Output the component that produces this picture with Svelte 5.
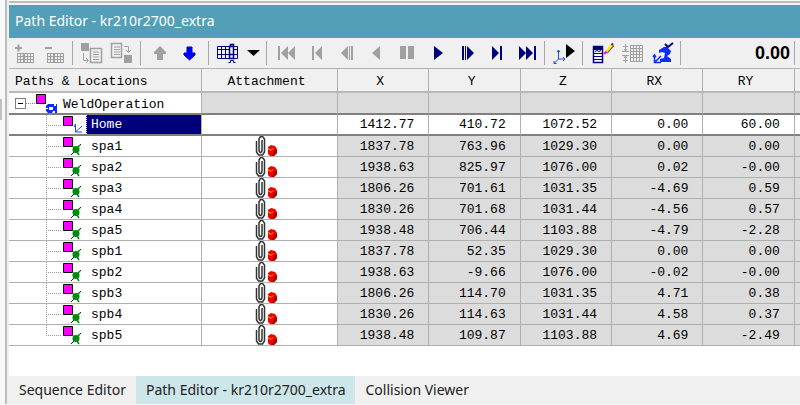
<script lang="ts">
  interface Location {
    name: string;
    kind: "home" | "weld";
    values: string[];
  }

  const axes = ["X", "Y", "Z", "RX", "RY"];

  const locations: Location[] = [
    { name: "Home", kind: "home", values: ["1412.77", "410.72", "1072.52", "0.00", "60.00"] },
    { name: "spa1", kind: "weld", values: ["1837.78", "763.96", "1029.30", "0.00", "0.00"] },
    { name: "spa2", kind: "weld", values: ["1938.63", "825.97", "1076.00", "0.02", "-0.00"] },
    { name: "spa3", kind: "weld", values: ["1806.26", "701.61", "1031.35", "-4.69", "0.59"] },
    { name: "spa4", kind: "weld", values: ["1830.26", "701.68", "1031.44", "-4.56", "0.57"] },
    { name: "spa5", kind: "weld", values: ["1938.48", "706.44", "1103.88", "-4.79", "-2.28"] },
    { name: "spb1", kind: "weld", values: ["1837.78", "52.35", "1029.30", "0.00", "0.00"] },
    { name: "spb2", kind: "weld", values: ["1938.63", "-9.66", "1076.00", "-0.02", "-0.00"] },
    { name: "spb3", kind: "weld", values: ["1806.26", "114.70", "1031.35", "4.71", "0.38"] },
    { name: "spb4", kind: "weld", values: ["1830.26", "114.63", "1031.44", "4.58", "0.37"] },
    { name: "spb5", kind: "weld", values: ["1938.48", "109.87", "1103.88", "4.69", "-2.49"] },
  ];

  // Toolbar groups, a separator is drawn after each one
  const groups = [
    [
      { icon: "add", label: "Add column", disabled: true },
      { icon: "remove", label: "Remove column", disabled: true },
    ],
    [
      { icon: "moveIn", label: "Move into path", disabled: true },
      { icon: "moveOut", label: "Move out of path", disabled: true },
    ],
    [
      { icon: "up", label: "Move up", disabled: true },
      { icon: "down", label: "Move down" },
    ],
    [
      { icon: "columns", label: "Customize columns" },
      { icon: "caret", label: "Column sets" },
    ],
    [
      { icon: "first", label: "Jump to start", disabled: true },
      { icon: "prev", label: "Previous location", disabled: true },
      { icon: "stepBack", label: "Step backward", disabled: true },
      { icon: "reverse", label: "Play backward", disabled: true },
      { icon: "pause", label: "Pause", disabled: true },
      { icon: "play", label: "Play forward" },
      { icon: "step", label: "Step forward" },
      { icon: "next", label: "Next location" },
      { icon: "last", label: "Jump to end" },
    ],
    [{ icon: "jump", label: "Play to location" }],
    [
      { icon: "edit", label: "Edit parameters" },
      { icon: "adjust", label: "Adjust rows", disabled: true },
      { icon: "robot", label: "Check robot reach" },
    ],
  ];

  const tabs = ["Sequence Editor", "Path Editor - kr210r2700_extra", "Collision Viewer"];

  let expanded = $state(true);
  let selected = $state("Home");
  let activeTab = $state(tabs[1]);
</script>

{#snippet icon(name: string)}
  <svg class="icon" width="24" height="24" viewBox="0 0 24 24" fill="currentColor" aria-hidden="true">
    {#if name === "add" || name === "remove"}
      <path d="M3 6h7v2H3z" />
      {#if name === "add"}<path d="M5.500 3.500h2v7h-2z" />{/if}
      <path d="M5 12h17v10H5z" />
      <path
        fill="#f0f0f0"
        d="M6 13h2v2H6zm3 0h2v2H9zm4 0h2v2h-2zm3 0h2v2h-2zm3 0h2v2h-2zM6 16h2v2H6zm3 0h2v2H9zm4 0h2v2h-2zm3 0h2v2h-2zm3 0h2v2h-2zM6 19h2v2H6zm3 0h2v2H9zm4 0h2v2h-2zm3 0h2v2h-2zm3 0h2v2h-2z"
      />
    {:else if name === "moveIn"}
      <path d="M1 2h8v8H1z" />
      <path d="M3.500 12v7.500H8M6 17l2.500 2.500L6 22" fill="none" stroke="currentColor" />
      <path d="M10.500 7.500h11v14h-11z" fill="none" stroke="currentColor" stroke-width="1.500" />
      <path d="M13 11h6M13 13.500h6M13 16h6M13 18.500h6" fill="none" stroke="currentColor" />
    {:else if name === "moveOut"}
      <path d="M1.500 2.500h10v14h-10z" fill="none" stroke="currentColor" stroke-width="1.500" />
      <path d="M4 6h6M4 8.500h6M4 11h6M4 13.500h6" fill="none" stroke="currentColor" />
      <path d="M14 5.500h4.500V11M16 9l2.500 2.500L21 9" fill="none" stroke="currentColor" />
      <path d="M14 14h8v8h-8z" />
    {:else if name === "up"}
      <path d="M12 5l6 6v2h-3v6H9v-6H6v-2z" />
    {:else if name === "down"}
      <path d="M9 6h5v6h3v2l-5.500 5L6 14v-2h3z" fill="#00f" stroke="#0000c8" />
    {:else if name === "columns"}
      <path d="M1.500 5.500h20v12h-20zM1.500 8.500h20M1.500 13.500h20M5.500 5.500v12M9.500 5.500v12" fill="none" stroke="currentColor" />
      <path d="M13.500 5.500h4v12h-4zM14.500 3.500h3v2h-3zM13.500 13.500h4" fill="#f0f0f0" stroke="currentColor" stroke-width="1.500" />
      <path d="M12.500 21.500h2v-2h3v2h2" fill="none" stroke="currentColor" />
    {:else if name === "caret"}
      <path d="M6 9h13l-6.500 6z" fill="#000" />
    {:else if name === "first"}
      <path d="M4 5h2v14H4zM14 5v14l-7-7zM21 5v14l-7-7z" />
    {:else if name === "prev"}
      <path d="M8 5h2v14H8zM18 5v14l-7-7z" />
    {:else if name === "stepBack"}
      <path d="M14 5v14l-7-7zM15 5h1v14h-1zM17 5h2v14h-2z" />
    {:else if name === "reverse"}
      <path d="M16 5v14l-8-7z" />
    {:else if name === "pause"}
      <path d="M6 5h6v13H6zM14 5h6v13h-6z" />
    {:else if name === "play"}
      <path d="M10 5l9 7-9 7z" />
    {:else if name === "step"}
      <path d="M8 5h2v14H8zM11 5h1v14h-1zM13 5l7 7-7 7z" />
    {:else if name === "next"}
      <path d="M8 5l7 7-7 7zM16 5h2v14h-2z" />
    {:else if name === "last"}
      <path d="M5 5l7 7-7 7zM12 5l7 7-7 7zM20 5h2v14h-2z" />
    {:else if name === "jump"}
      <path d="M14 3l9 7-9 7z" fill="#000" />
      <path d="M6.500 9v9H13M6.500 18L2 22.500M11 16l2 2-2 2M5 11l1.500-2L8 11M2 20v2.500h2.500" fill="none" stroke="#2448e8" />
    {:else if name === "edit"}
      <path d="M3.500 5.500h9v16h-9z" fill="#fff" stroke="currentColor" stroke-width="1.500" />
      <path d="M3 6h10v3H3z" />
      <path d="M4 12.500h8M4 15.500h8M4 18.500h8M5 10.500l2-1 2 1 2-1" fill="none" stroke="currentColor" />
      <path d="M16.500 11.500L23 4" stroke="#555" stroke-width="3" />
      <path d="M16 11l6-7" stroke="#ffef00" stroke-width="2.500" />
      <path d="M14 13l2.500-2.500" stroke="#f0f" stroke-width="2" />
      <path d="M21.500 4l1.500-1.500" stroke="#c00000" stroke-width="2" />
    {:else if name === "adjust"}
      <path d="M10 4h13v17H10z" />
      <path
        fill="#f0f0f0"
        d="M11 5h2v2h-2zm3 0h2v2h-2zm3 0h2v2h-2zm3 0h2v2h-2zM11 8h2v2h-2zm3 0h2v2h-2zm3 0h2v2h-2zm3 0h2v2h-2zM11 11h2v2h-2zm3 0h2v2h-2zm3 0h2v2h-2zm3 0h2v2h-2zM11 14h2v2h-2zm3 0h2v2h-2zm3 0h2v2h-2zm3 0h2v2h-2zM11 17h2v3h-2zm3 0h2v3h-2zm3 0h2v3h-2zm3 0h2v3h-2z"
      />
      <path d="M2 10.500h7M2 14.500h7M5.500 3v7M5.500 15v7M3 5.500h5M3 19.500h5M4 8l1.500 2L7 8M4 17l1.500-2L7 17" fill="none" stroke="currentColor" />
    {:else if name === "robot"}
      <path d="M9 9l5-3h3l4 4-1 3-3 2 4 3v3H10v-3l4-1 1-5-3-1-3 1z" fill="#0a2cff" />
      <path d="M15 3l3 3 5-4" fill="none" stroke="#00007b" stroke-width="2" />
      <path d="M4.500 14v7.500H11M5 21l6-6M3 16l1.500-2L6 16" fill="none" stroke="#0a2cff" stroke-width="1.500" />
    {/if}
  </svg>
{/snippet}

{#snippet nodeIcon(kind: string)}
  <svg class="node" width="24" height="20" viewBox="0 0 24 20" aria-hidden="true">
    <path d="M1.500 1.500h9v9h-9z" fill="#f0f" stroke="#000" />
    {#if kind === "root"}
      <path d="M11 13l2-2h6v2h2v-2h1v9h-2v-2h-2l-1 2h-4l-2-2v-2h2v-1h-2z" fill="#0a2cff" />
      <path d="M14 14h4v3h-4z" fill="#fff" />
    {:else if kind === "home"}
      <path d="M13.500 9v8H20M13.500 17L20 11M12 12l1.500-3" fill="none" stroke="#2448e8" />
    {:else}
      <path d="M9 19l3-3M16 11l3-3" stroke="#222" />
      <circle cx="14" cy="13.500" r="3.500" fill="#008a10" />
      <path d="M11 11l2 1M15 16l2 3M16 11l2-2" stroke="#008a10" stroke-width="1.500" />
    {/if}
  </svg>
{/snippet}

{#snippet attachment()}
  <svg class="clip" width="24" height="20" viewBox="0 0 24 20" aria-hidden="true">
    <path d="M1.500 5v11l2 3h4l2-3V3l-2-2.500h-2L4 3v12l1 1.500h1L7 15V4" fill="none" stroke="#333" stroke-width="1.500" />
    <path d="M13 11l3-2 4 1 2 3v4l-3 3h-4l-2-2z" fill="#f00000" />
    <path d="M19 14h3v3l-3 3h-2z" fill="#b00000" />
    <path d="M13 12.500l3 2 2-2" fill="none" stroke="#ffc000" />
  </svg>
{/snippet}

<div class="window">
  <div class="splitter"><span class="grip"></span></div>
  <main class="panel">
    <h1 class="title">Path Editor - kr210r2700_extra</h1>

    <div class="toolbar" role="toolbar" aria-label="Path editor">
      {#each groups as group}
        {#each group as item}
          <button class="tool" class:narrow={item.icon === "caret"} disabled={item.disabled} aria-label={item.label}>
            {@render icon(item.icon)}
          </button>
        {/each}
        <span class="separator"></span>
      {/each}
      <output class="time">0.00</output>
      <span class="separator end"></span>
    </div>

    <table>
      <colgroup>
        <col class="col-tree" />
        <col class="col-attachment" />
        {#each axes as axis (axis)}
          <col class="col-axis" />
        {/each}
        <col />
      </colgroup>
      <thead>
        <tr>
          <th class="tree-head">Paths &amp; Locations</th>
          <th>Attachment</th>
          {#each axes as axis (axis)}
            <th>{axis}</th>
          {/each}
          <th></th>
        </tr>
      </thead>
      <tbody>
        <tr class="root">
          <td class="tree">
            <div class="tree-cell">
              <button
                class="toggle"
                aria-label="Toggle WeldOperation"
                aria-expanded={expanded}
                onclick={() => (expanded = !expanded)}
              >
                <svg width="9" height="9" viewBox="0 0 9 9" aria-hidden="true">
                  <path d={expanded ? "M2 4h5v1H2z" : "M2 4h5v1H2zM4 2h1v5H4z"} />
                </svg>
              </button>
              <span class="stub"></span>
              {@render nodeIcon("root")}
              <span class="name">WeldOperation</span>
            </div>
          </td>
          <td></td>
          {#each axes as axis (axis)}
            <td></td>
          {/each}
          <td></td>
        </tr>
        {#if expanded}
          {#each locations as location, i (location.name)}
            <tr class:selected={selected === location.name} onclick={() => (selected = location.name)}>
              <td class="tree">
                <div class="tree-cell">
                  <span class="branch" class:last={i === locations.length - 1}></span>
                  {@render nodeIcon(location.kind)}
                  <span class="name">{location.name}</span>
                </div>
              </td>
              <td class="attached">
                {#if location.kind === "weld"}
                  {@render attachment()}
                {/if}
              </td>
              {#each location.values as value}
                <td class="value">{value}</td>
              {/each}
              <td></td>
            </tr>
          {/each}
        {/if}
      </tbody>
    </table>

    <div class="tabs" role="tablist">
      {#each tabs as tab (tab)}
        <button
          class="tab"
          class:active={activeTab === tab}
          role="tab"
          aria-selected={activeTab === tab}
          onclick={() => (activeTab = tab)}>{tab}</button
        >
      {/each}
    </div>
  </main>
</div>

<style>
  :global(body) {
    margin: 0;
    background: #fff;
  }

  .window {
    display: flex;
    box-sizing: border-box;
    min-height: 100vh;
    border-bottom: 1px solid #f6f6f6;
    color: #000;
  }

  .splitter {
    flex: none;
    width: 5px;
    padding-top: 99px;
    border-right: 2px solid #bcbcbc;
    background: #f8f8f8;
  }

  .grip {
    display: block;
    width: 2px;
    height: 21px;
    background: #c0c0c0;
  }

  .panel {
    display: flex;
    flex: 1;
    flex-direction: column;
    min-width: 0;
    padding-top: 1px;
    border-left: 2px solid #f0f0f0;
  }

  .title {
    margin: 0;
    padding: 0 6px;
    border-top: 2px solid #bcbcbc;
    background: #549fb8;
    box-shadow: inset 0 2px #f4f4f4;
    color: #fff;
    font: 14px/35px "Noto Sans", "Open Sans", sans-serif;
  }

  .toolbar {
    display: flex;
    align-items: center;
    height: 30px;
    border-bottom: 1px solid #b4b4b4;
    background: #f0f0f0;
  }

  .tool {
    display: flex;
    flex: none;
    align-items: center;
    justify-content: center;
    width: 30px;
    height: 28px;
    padding: 0;
    border: 0;
    background: none;
    color: #00007b;
  }

  .tool.narrow {
    width: 20px;
  }

  .tool:disabled {
    color: #a0a0a0;
  }

  .icon {
    flex: none;
  }

  .separator {
    flex: none;
    width: 1px;
    height: 24px;
    margin: 0 4px 0 3px;
    background: #a8a8a8;
  }

  .separator.end {
    margin: 0 5px 0 4px;
  }

  .time {
    flex: 1;
    text-align: right;
    font: bold 18px/24px "Liberation Sans", sans-serif;
  }

  table {
    width: 100%;
    border-spacing: 0;
    table-layout: fixed;
    font: 13px/18px "Liberation Mono", monospace;
  }

  .col-tree {
    width: 193px;
  }

  .col-attachment {
    width: 136px;
  }

  .col-axis {
    width: 11.55%;
  }

  th,
  td {
    padding: 0;
    border-right: 1px solid #b0b0b0;
    border-bottom: 1px solid #b0b0b0;
    background: #dcdcdc;
  }

  th:last-child,
  td:last-child {
    border-right: 0;
  }

  th {
    padding: 4px 6px 0 0;
    background: #f0f0f0;
    border-bottom: 2px solid #b8b8b8;
    font-weight: normal;
  }

  .tree-head {
    padding-left: 6px;
    text-align: left;
  }

  .tree,
  .attached {
    background: #fff;
  }

  .tree-cell {
    display: flex;
    height: 20px;
  }

  .root td {
    border-bottom: 2px solid #808080;
  }

  .root .tree-cell {
    align-items: center;
    padding-left: 6px;
  }

  .toggle {
    display: flex;
    padding: 0;
    border: 1px solid #808080;
    background: #fff;
  }

  .stub {
    width: 9px;
    border-top: 1px dotted #808080;
  }

  .branch {
    box-sizing: border-box;
    width: 15px;
    margin: 0 1px 0 37px;
    background:
      repeating-linear-gradient(90deg, #999 0 1px, transparent 1px 2px) 0 10px / 100% 1px no-repeat,
      repeating-linear-gradient(#999 0 1px, transparent 1px 2px) 0 0 / 1px 100% no-repeat;
  }

  .branch.last {
    background-size:
      100% 1px,
      1px 11px;
  }

  .node {
    flex: none;
  }

  .name {
    flex: 1;
    padding: 2px 0 0 5px;
  }

  .root .name {
    padding: 4px 0 0 4px;
  }

  .attached {
    padding-right: 6px;
  }

  .clip {
    display: block;
    margin: 0 auto;
  }

  .value {
    padding: 2px 14px 0 0;
    text-align: right;
  }

  .selected td {
    border-bottom: 2px solid #808080;
    background: #fff;
  }

  .selected .tree-cell {
    height: 19px;
  }

  .selected .value {
    padding-top: 1px;
  }

  .selected .name {
    border-left: 1px dotted #ffff60;
    padding: 1px 0 0 4px;
    background: #00007b;
    color: #fff;
  }

  .tabs {
    display: flex;
    margin-top: auto;
    background: #f0f0f0;
  }

  .tab {
    padding: 0 10px;
    border: 0;
    background: none;
    color: #222;
    font: 14px/28px "Noto Sans", "Open Sans", sans-serif;
  }

  .tab.active {
    background: #cce6ea;
  }
</style>
